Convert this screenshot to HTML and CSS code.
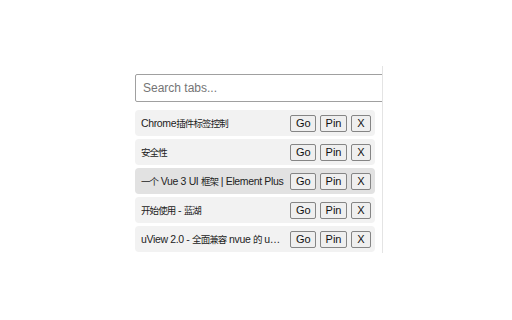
FILE: index.html
```html
<!DOCTYPE html>
<html>
<head>
<meta charset="utf-8">
<link rel="stylesheet" href="styles.css">
</head>
<body>
<div class="page">
  <div class="panel">
    <input class="search" type="text" placeholder="Search tabs...">
    <div class="list">
      <div class="row">
        <span class="title">Chrome<span class="cjk">插件标签控制</span></span>
        <div class="actions"><button class="btn">Go</button><button class="btn">Pin</button><button class="btn">X</button></div>
      </div>
      <div class="row">
        <span class="title"><span class="cjk">安全性</span></span>
        <div class="actions"><button class="btn">Go</button><button class="btn">Pin</button><button class="btn">X</button></div>
      </div>
      <div class="row row-hover">
        <span class="title"><span class="cjk">一个</span> Vue 3 UI <span class="cjk">框架</span> | Element Plus</span>
        <div class="actions"><button class="btn">Go</button><button class="btn">Pin</button><button class="btn">X</button></div>
      </div>
      <div class="row">
        <span class="title"><span class="cjk">开始使用</span> - <span class="cjk">蓝湖</span></span>
        <div class="actions"><button class="btn">Go</button><button class="btn">Pin</button><button class="btn">X</button></div>
      </div>
      <div class="row">
        <span class="title">uView 2.0 - <span class="cjk">全面兼容</span> nvue <span class="cjk">的</span> uni-app <span class="cjk">生态框架</span></span>
        <div class="actions"><button class="btn">Go</button><button class="btn">Pin</button><button class="btn">X</button></div>
      </div>
    </div>
  </div>
</div>
</body>
</html>
```
FILE: styles.css
```css
html, body {
  margin: 0;
  padding: 0;
  background: #fff;
  font-family: "Liberation Sans", "Noto Sans CJK SC", sans-serif;
}
.page {
  padding: 66px 0 0 135px;
}
.panel {
  width: 248px;
  height: 187px;
  box-sizing: border-box;
  padding-top: 8px;
  border-right: 1px solid #e4e4e4;
  overflow: hidden;
}
.search {
  display: block;
  box-sizing: border-box;
  width: 262px;
  height: 28px;
  margin: 0;
  padding: 0 7px;
  border: 1px solid #a0a0a0;
  border-radius: 2px;
  font-family: inherit;
  font-size: 12px;
  color: #333;
  outline: none;
}
.search::placeholder {
  color: #757575;
}
.list {
  display: flex;
  flex-direction: column;
  gap: 3px;
  margin-top: 8px;
  width: 240px;
}
.row {
  display: flex;
  align-items: center;
  height: 26px;
  box-sizing: border-box;
  padding: 0 4px 0 6px;
  background: #f2f2f2;
  border-radius: 4px;
}
.row-hover {
  background: #e2e2e2;
}
.title {
  flex: 1;
  min-width: 0;
  overflow: hidden;
  white-space: nowrap;
  text-overflow: ellipsis;
  font-size: 10.5px;
  letter-spacing: -0.35px;
  color: #222;
}
.cjk {
  font-family: "Noto Sans CJK SC", sans-serif;
  font-size: 9.5px;
  letter-spacing: -0.9px;
}
.actions {
  display: flex;
  flex-shrink: 0;
  gap: 4px;
  margin-left: 5px;
}
.btn {
  height: 17px;
  margin: 0;
  padding: 0 4.5px;
  min-width: 20px;
  font-family: "Liberation Sans", sans-serif;
  font-size: 11px;
  color: #111;
  background: #efefef;
  border: 1px solid #858585;
  border-radius: 2px;
  line-height: 15px;
}
```
